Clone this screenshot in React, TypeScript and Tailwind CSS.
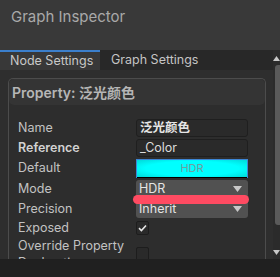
import React from 'react';

const font = { fontFamily: 'Inter, "Noto Sans CJK SC", sans-serif' };

const Row = ({ label, bold, children, h = 'h-[20px]' }: { label: string; bold?: boolean; children?: React.ReactNode; h?: string }) => (
  <div className={`flex items-center ${h}`}>
    <div className={`w-[127px] pl-[9px] text-[12.5px] ${bold ? 'font-semibold text-[#d2d2d2]' : 'text-[#c2c2c2]'}`}>{label}</div>
    <div className="flex-1 pr-[17px]">{children}</div>
  </div>
);

const Dropdown = ({ value }: { value: string }) => (
  <div className="h-[18px] rounded-[3px] bg-[#515151] flex items-center justify-between px-[3px] text-[12.5px] text-[#e4e4e4]">
    <span>{value}</span>
    <svg width="9" height="6" viewBox="0 0 9 6" className="mr-[3px]">
      <path d="M0 0h9L4.5 6z" fill="#c8c8c8" />
    </svg>
  </div>
);

const Checkbox = ({ checked }: { checked?: boolean }) => (
  <div className="w-[13px] h-[14px] rounded-[2px] bg-[#2a2a2a] border border-[#1d1d1d] flex items-center justify-center">
    {checked && (
      <svg width="9" height="8" viewBox="0 0 9 8">
        <path d="M1 4.2L3.4 6.5 8 1.5" stroke="#e6e6e6" strokeWidth="1.6" fill="none" />
      </svg>
    )}
  </div>
);

export default function App() {
  return (
    <div style={font} className="w-[280px] h-[277px] bg-[#393939] flex flex-col overflow-hidden">
      <div className="h-[50px] pl-[11px] pt-[6px] text-[15px] text-[#a9a9a9]">Graph Inspector</div>
      <div className="flex flex-1 min-h-0">
        <div className="flex-1 flex flex-col min-h-0">
          <div className="h-[20px] flex bg-[#282828] text-[12.5px]">
            <div className="w-[100px] bg-[#383838] border-t-2 border-[#3b7fcc] pl-[10px] text-[#c8c8c8] leading-[17px]">Node Settings</div>
            <div className="pl-[11px] text-[#c4c4c4] leading-[19px]">Graph Settings</div>
          </div>
          <div className="flex-1 min-h-0 bg-[#2e2e2e] pt-[8px] pl-[8px] pr-[7px] overflow-hidden">
            <div className="relative h-full overflow-hidden border border-b-0 border-[#4c4c4c] rounded-t-[5px] bg-[#2d2d2d]">
              <div className="h-[26px] bg-[#343434] rounded-[5px] flex items-center pl-[3px] text-[14px] font-semibold text-[#b6b6b6]">
                Property: 泛光颜色
              </div>
              <div className="pt-[13px] flex flex-col">
                <Row label="Name">
                  <div className="h-[18px] rounded-[3px] bg-[#2a2a2a] border border-[#1f1f1f] flex items-center px-[3px] text-[12.5px] font-bold text-[#e6e6e6]">泛光颜色</div>
                </Row>
                <Row label="Reference" bold>
                  <div className="h-[18px] rounded-[3px] bg-[#2a2a2a] border border-[#1f1f1f] flex items-center px-[3px] text-[12.5px] text-[#dcdcdc]">_Color</div>
                </Row>
                <Row label="Default" h="h-[21px]">
                  <div className="h-[19px] border border-[#3d86d6] flex flex-col">
                    <div className="flex-1 bg-[radial-gradient(ellipse_at_center,#00ffff_60%,#00d8d8_100%)] flex items-center justify-center text-[11px] text-[#6aa0a0]">HDR</div>
                    <div className="h-[2px] bg-black" />
                  </div>
                </Row>
                <Row label="Mode">
                  <Dropdown value="HDR" />
                </Row>
                <Row label="Precision">
                  <Dropdown value="Inherit" />
                </Row>
                <Row label="Exposed" h="h-[18px]">
                  <Checkbox checked />
                </Row>
                <div className="flex">
                  <div className="w-[127px] pl-[9px] text-[12.5px] leading-[17px] text-[#c2c2c2]">Override Property Declaration</div>
                  <div className="pt-[10px]">
                    <Checkbox />
                  </div>
                </div>
              </div>
              <div className="absolute left-[124px] top-[116px] w-[116px] h-[9px] rounded-full bg-[#ff4b62]" />
            </div>
          </div>
        </div>
        <div className="w-[7px] bg-[#2b2b2b] flex flex-col items-center">
          <svg width="7" height="5" viewBox="0 0 7 5" className="mt-[6px]">
            <path d="M0 5h7L3.5 0z" fill="#c8c8c8" />
          </svg>
          <div className="w-[5px] ml-[2px] mt-[4px] h-[160px] rounded-l-[3px] bg-[#5a5a5a]" />
          <div className="flex-1" />
          <svg width="7" height="5" viewBox="0 0 7 5" className="mb-[4px]">
            <path d="M0 0h7L3.5 5z" fill="#c8c8c8" />
          </svg>
        </div>
      </div>
      <div className="h-[18px] bg-[#202020]" />
    </div>
  );
}
